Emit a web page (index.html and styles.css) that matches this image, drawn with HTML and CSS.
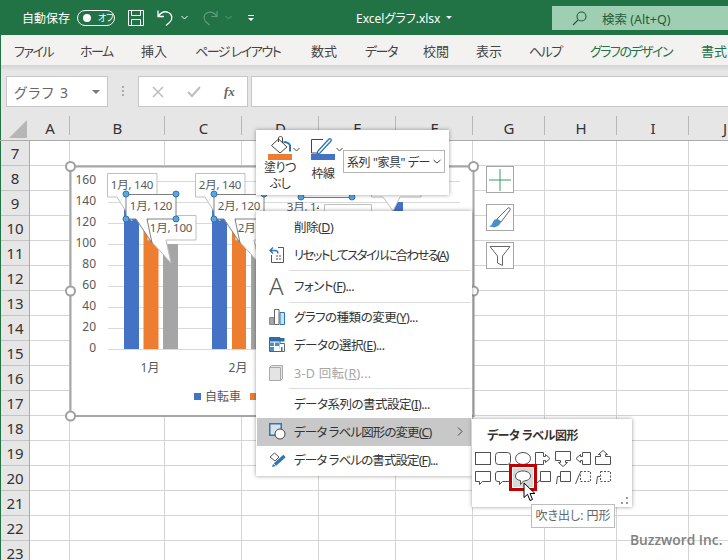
FILE: index.html
```html
<!DOCTYPE html>
<html lang="ja">
<head>
    <meta charset="UTF-8">
    <title>Excelグラフ.xlsx</title>
    <link rel="stylesheet" href="styles.css">
</head>
<body>
    <!-- タイトルバー -->
    <header class="titlebar">
        <span class="autosave">自動保存</span>
        <span class="toggle"><i class="toggle-dot"></i><span class="toggle-text">オフ</span></span>
        <svg class="qat qat-save" width="16" height="16" viewBox="0 0 16 16" fill="none" stroke="#fff"><path d="M.5.5h15v15H.5zM3.5.5v5h9v-5M3.5 15.500v-6h9v6"/></svg>
        <svg class="qat qat-undo" width="17" height="17" viewBox="0 0 17 17" fill="none" stroke="#fff" stroke-width="1.3"><path d="M1 1.500v6h6M1.500 7C4 3.500 8 2 11.500 3.500c4 2 4.500 7 1 10L9 16.500"/></svg>
        <svg class="qat qat-caret" width="7" height="5" viewBox="0 0 7 5" fill="none" stroke="#fff"><path d="M.5 1l3 3 3-3"/></svg>
        <svg class="qat qat-redo" width="16" height="17" viewBox="0 0 17 17" fill="none" stroke="#5f9f7f" stroke-width="1.2"><path d="M16 1.500v6h-6M15.500 7C13 3.500 9 2 5.500 3.500c-4 2-4.500 7-1 10L8 16.500"/></svg>
        <svg class="qat qat-caret2" width="7" height="5" viewBox="0 0 7 5" fill="none" stroke="#5f9f7f"><path d="M.5 1l3 3 3-3"/></svg>
        <svg class="qat qat-more" width="8" height="8" viewBox="0 0 8 8" fill="#fff"><path d="M1 1h6v1H1zM1 4h6L4 7z"/></svg>
        <span class="doc-title">Excelグラフ.xlsx</span>
        <i class="doc-caret"></i>
        <div class="search">
            <svg width="15" height="15" viewBox="0 0 15 15" fill="none" stroke="#1f5c3a" stroke-width="1.1"><circle cx="9.500" cy="5.500" r="4.500"/><path d="M6 9l-5 5"/></svg>
            <span>検索 (Alt+Q)</span>
        </div>
    </header>

    <!-- リボンのタブ -->
    <nav class="tabs">
        <span class="tab-kana">ファイル</span>
        <span class="tab-kana">ホーム</span>
        <span>挿入</span>
        <span class="tab-kana">ページ レイアウト</span>
        <span>数式</span>
        <span class="tab-kana">データ</span>
        <span>校閲</span>
        <span>表示</span>
        <span class="tab-kana">ヘルプ</span>
        <span class="tab-kana tab-green">グラフのデザイン</span>
        <span class="tab-green">書式</span>
    </nav>

    <!-- 数式バー -->
    <div class="formula-bar">
        <div class="name-box"><span>グラフ 3</span><i class="name-caret"></i></div>
        <div class="grip"></div>
        <div class="fx-box">
            <svg width="12" height="12" viewBox="0 0 12 12" stroke="#bdbdbd" stroke-width="1.500"><path d="M1 1l10 10M11 1L1 11"/></svg>
            <svg width="14" height="12" viewBox="0 0 14 12" fill="none" stroke="#bdbdbd" stroke-width="2"><path d="M1 6l4 4 8-9"/></svg>
            <span class="fx">fx</span>
        </div>
        <div class="formula-input"></div>
    </div>

    <!-- シート -->
    <main class="sheet">
        <div class="col-head">
            <div class="corner"><i></i></div>
            <span class="c-a">A</span><span class="c-b">B</span><span class="c-c">C</span><span class="c-c">D</span><span class="c-c">E</span><span class="c-c">F</span><span class="c-g">G</span><span class="c-g">H</span><span class="c-g">I</span><span class="c-g">J</span>
        </div>
        <div class="sheet-body">
            <div class="row-head">
                <span>7</span><span>8</span><span>9</span><span>10</span><span>11</span><span>12</span><span>13</span><span>14</span><span>15</span><span>16</span><span>17</span><span>18</span><span>19</span><span>20</span><span>21</span><span>22</span><span>23</span>
            </div>
            <div class="cells">
                <i class="c-a"></i><i class="c-b"></i><i class="c-c"></i><i class="c-c"></i><i class="c-c"></i><i class="c-c"></i><i class="c-g"></i><i class="c-g"></i><i class="c-g"></i><i class="c-g"></i>
            </div>
        </div>

        <!-- グラフ -->
        <svg class="chart" width="404" height="251" viewBox="70 166 404 251">
            <rect x="71" y="167" width="402" height="249" fill="#fff"/>
            <g stroke="#d9d9d9">
                <path d="M108 181.500h352M108 202.500h352M108 223.500h352M108 244.500h352M108 265.500h352M108 286.500h352M108 307.500h352M108 328.500h352M108 349.500h352"/>
            </g>
            <g class="axis" text-anchor="end">
                <text x="96" y="184">160</text><text x="96" y="205">140</text><text x="96" y="226">120</text><text x="96" y="247">100</text><text x="96" y="268">80</text><text x="96" y="289">60</text><text x="96" y="310">40</text><text x="96" y="331">20</text><text x="96" y="352">0</text>
            </g>
            <g class="axis" text-anchor="middle">
                <text x="150" y="372">1月</text><text x="238" y="372">2月</text>
            </g>
            <rect x="194" y="393" width="7" height="7" fill="#4472c4"/>
            <text class="axis" x="205" y="401">自転車</text>
            <rect x="250" y="393" width="7" height="7" fill="#ed7d31"/>

            <!-- 棒 -->
            <path fill="#4472c4" d="M124 202h15v147h-15zM212 202h15v147h-15zM392 202h11v147h-11z"/>
            <path fill="#ed7d31" d="M143.500 223h15v126h-15zM232 223h14v126h-14z"/>
            <path fill="#a5a5a5" d="M163 244h15v105h-15zM251 244h15v105h-15z"/>

            <!-- データラベル -->
            <g class="label">
                <path d="M107.500 173.500h49.500v23.500h-30l5 24-15-24h-9.500z"/>
                <path d="M195.500 173.500h49.500v23.500h-30l5 24-15-24h-9.500z"/>
                <path d="M371.500 173.500h49.500v23.500h-21l-7 14-10-14h-11.500z"/>
                <path d="M147.500 215.500h48.500v24.500h-30l5 23-21-23h-2.500z"/>
                <path d="M235.500 215.500h48.500v24.500h-30l5 23-21-23h-2.500z"/>
            </g>
            <g class="label-sel">
                <path d="M126 194.500h50v24.500h-29l5 24-16-24h-10z"/>
                <path d="M214 194.500h50v24.500h-29l5 24-16-24h-10z"/>
                <path d="M301 197.500h51"/>
            </g>
            <g class="chart-text" text-anchor="middle">
                <text x="132" y="189">1月, 140</text><text x="151" y="210">1月, 120</text><text x="171" y="232">1月, 100</text>
                <text x="220" y="189">2月, 140</text><text x="239" y="210">2月, 120</text><text x="259" y="232">2月, 100</text>
                <text x="308" y="211">3月, 140</text>
            </g>
            <rect x="319" y="203" width="60" height="10" fill="#fff"/>
            <g class="label"><path d="M324.500 204.500h47v10h-47z"/></g>
            <g class="sel-handle">
                <circle cx="126" cy="194" r="3"/><circle cx="176" cy="194" r="3"/><circle cx="126" cy="219" r="3"/><circle cx="176" cy="219" r="3"/>
                <circle cx="214" cy="194" r="3"/><circle cx="264" cy="194" r="3"/><circle cx="214" cy="219" r="3"/>
                <circle cx="301" cy="197" r="3"/><circle cx="352" cy="197" r="3"/>
            </g>
        </svg>
        <svg class="chart-frame" width="424" height="270" viewBox="60 156 424 270" fill="none">
            <rect x="70.500" y="166.500" width="403" height="249.500" stroke="#a6a6a6" stroke-width="2"/>
            <g class="handle">
                <circle cx="70.500" cy="166.500" r="4.500"/><circle cx="70.500" cy="291" r="4.500"/><circle cx="70.500" cy="416" r="4.500"/>
                <circle cx="473.500" cy="166.500" r="4.500"/><circle cx="473.500" cy="291" r="4.500"/>
            </g>
        </svg>

        <!-- グラフ右のボタン -->
        <div class="side-buttons">
            <div class="side-btn"><svg width="22" height="22" viewBox="0 0 22 22" stroke="#3f9a63"><path d="M11 0v22M0 11h22"/></svg></div>
            <div class="side-btn"><svg width="24" height="24" viewBox="0 0 24 24"><path d="M9 13L20 2c1-1 3 .500 2 2L13 16z" fill="#fff" stroke="#666"/><path d="M9 13c-3 0-4 3-5 5-.500 1.500-2 2-3 2 3 2 10 2 12-4z" fill="#4a90c8"/></svg></div>
            <div class="side-btn"><svg width="22" height="22" viewBox="0 0 22 22" fill="#fff" stroke="#666"><path d="M1 1.500h20L13.500 11v9.500l-5-2.500v-7z"/></svg></div>
        </div>

        <!-- ミニツールバー -->
        <div class="mini-bar">
            <div class="mini-tool mini-fill">
                <div class="mini-icon">
                    <svg width="24" height="18" viewBox="0 0 24 18" fill="none"><path d="M3.500 9.500l7-6.500 8.500 8-7 6z" stroke="#444"/><path d="M10.500 6V2c0-2 4-2 4 0v5" stroke="#444"/><path d="M15.500 6c3 0 6 1.500 6.500 3.500v6" stroke="#2e75b6" stroke-width="2"/></svg>
                    <svg class="mini-caret" width="7" height="5" viewBox="0 0 7 5" fill="none" stroke="#444"><path d="M.5 1l3 3 3-3"/></svg>
                </div>
                <i class="swatch swatch-orange"></i>
                <span class="mini-label">塗りつ<br>ぶし</span>
            </div>
            <div class="mini-tool mini-line">
                <div class="mini-icon">
                    <svg width="24" height="18" viewBox="0 0 24 18" fill="none"><path d="M.5 17V3.500H12M.5 17H6" stroke="#444"/><path d="M7 15L18 3c1-1 3 .500 2 2L9 17l-3 1z" fill="#fff" stroke="#2e75b6" stroke-width="1.300"/></svg>
                    <svg class="mini-caret" width="7" height="5" viewBox="0 0 7 5" fill="none" stroke="#444"><path d="M.5 1l3 3 3-3"/></svg>
                </div>
                <i class="swatch swatch-blue"></i>
                <span class="mini-label mini-label-low">枠線</span>
            </div>
            <div class="series-select">
                <span>系列 "家具" デー</span>
                <svg width="8" height="5" viewBox="0 0 8 5" fill="none" stroke="#444"><path d="M.5 1L4 4l3.500-3"/></svg>
            </div>
        </div>

        <!-- コンテキストメニュー -->
        <div class="menu">
            <div class="menu-item"><span class="menu-icon"></span><span>削除(<u>D</u>)</span></div>
            <div class="menu-item">
                <span class="menu-icon"><svg width="16" height="17" viewBox="0 0 16 17" fill="none"><path d="M9 1.500h5.500v15h-12V9" stroke="#555"/><path d="M1 4.500h5c2 0 3 1 3 3M4 1.500l-3 3 3 3" stroke="#2e75b6" stroke-width="1.300"/><path d="M7 10h5M7 13h5" stroke="#555" stroke-dasharray="2 1"/></svg></span>
                <span class="text-tight">リセットしてスタイルに合わせる(<u>A</u>)</span>
            </div>
            <hr class="menu-sep">
            <div class="menu-item menu-item-font"><span class="menu-icon menu-icon-a">A</span><span>フォント(<u>F</u>)...</span></div>
            <hr class="menu-sep">
            <div class="menu-item">
                <span class="menu-icon"><svg width="16" height="16" viewBox="0 0 16 16"><path d="M.500 8.500h4.500v7H.500z" fill="#a6a6a6" stroke="#8c8c8c"/><path d="M5.500.5h4.500v15H5.500z" fill="#fff" stroke="#666"/><path d="M11 3.500h4.500v12H11z" fill="#cde2f4" stroke="#2e75b6"/></svg></span>
                <span>グラフの種類の変更(<u>Y</u>)...</span>
            </div>
            <div class="menu-item">
                <span class="menu-icon"><svg width="16" height="15" viewBox="0 0 16 15"><path d="M.500.5h10.500v14H.500z" fill="#fff" stroke="#2e6da4"/><path d="M.5 1h15v3.500H.5z" fill="#2e6da4"/><path d="M1 5.500h4v3.500H1zM6 5.500h4v3.500H6zM1 10h4v4H1z" fill="#4a90c8"/><path d="M11 6.500h4.500v8H10" fill="#fff" stroke="#666"/><path d="M12 10h1.500v4H12z" fill="#2e75b6"/></svg></span>
                <span>データの選択(<u>E</u>)...</span>
            </div>
            <div class="menu-item menu-item-off">
                <span class="menu-icon"><svg width="14" height="16" viewBox="0 0 14 16"><path d="M.5 2.500l2-2h11v13l-2 2H.5z" fill="#e4e4e4" stroke="#aaa"/><path d="M.5 2.500h11v13" fill="none" stroke="#aaa"/></svg></span>
                <span>3-D 回転(<u>R</u>)...</span>
            </div>
            <hr class="menu-sep menu-sep-last">
            <div class="menu-item"><span class="menu-icon"></span><span>データ系列の書式設定(<u>I</u>)...</span></div>
            <div class="menu-item menu-item-on">
                <span class="menu-icon"><svg width="17" height="17" viewBox="0 0 17 17"><path d="M.75.75h11.500v11.500H.75z" fill="#d8e2ec" stroke="#2e75b6" stroke-width="1.500"/><circle cx="11" cy="11" r="5" fill="#fff" stroke="#444"/></svg></span>
                <span class="text-mid">データ ラベル図形の変更(<u>C</u>)</span>
                <svg class="menu-chevron" width="6" height="9" viewBox="0 0 6 9" fill="none" stroke="#444"><path d="M1 .5l4 4-4 4"/></svg>
            </div>
            <div class="menu-item">
                <span class="menu-icon"><svg width="17" height="16" viewBox="0 0 17 16" fill="none"><path d="M1 5l4.500-4 4.500 4-4 4z" stroke="#555"/><path d="M15.500 4L6 12.500" stroke="#2e75b6" stroke-width="3.500"/><path d="M4 12l-1 3 4-1z" fill="#2e75b6"/></svg></span>
                <span class="text-mid">データ ラベルの書式設定(<u>F</u>)...</span>
            </div>
        </div>

        <!-- サブメニュー -->
        <div class="gallery">
            <div class="gallery-title">データ ラベル図形</div>
            <div class="shape-grid">
                <svg viewBox="0 0 20 19"><rect x="2.500" y="3.500" width="15" height="12"/></svg>
                <svg viewBox="0 0 20 19"><rect x="2.500" y="3.500" width="15" height="12" rx="3"/></svg>
                <svg viewBox="0 0 20 19"><ellipse cx="10" cy="9.500" rx="7.500" ry="6"/></svg>
                <svg viewBox="0 0 20 19"><path d="M2.500 3.500h8v4h2v-2l4.500 4-4.500 4v-2h-2v4h-8z"/></svg>
                <svg viewBox="0 0 20 19"><path d="M2.500 2.500h15v9h-5v2h2l-4.500 4-4.500-4h2v-2h-5z"/></svg>
                <svg viewBox="0 0 20 19"><path d="M17.500 3.500h-8v4h-2v-2l-4.500 4 4.500 4v-2h2v4h8z"/></svg>
                <svg viewBox="0 0 20 19"><path d="M2.500 15.500v-8h5v-2h-2l4.500-4 4.500 4h-2v2h5v8z"/></svg>
                <svg viewBox="0 0 20 19"><path d="M2.500 3.500h15v10h-8l-3 3v-3h-4z"/></svg>
                <svg viewBox="0 0 20 19"><path d="M5 3.500h10c1.500 0 2.500 1 2.500 2.500v5c0 1.500-1 2.500-2.500 2.500H9.500l-3 3v-3H5c-1.500 0-2.500-1-2.500-2.500V6c0-1.500 1-2.500 2.500-2.500z"/></svg>
                <svg class="shape-on" viewBox="0 0 20 19"><path d="M10 3c4 0 7.500 2 7.500 5s-3.500 5-7 5l-3 3.500V12.500C4 12 2.500 10.500 2.500 8c0-3 3.500-5 7.500-5z"/></svg>
                <svg viewBox="0 0 20 19"><path d="M7.500 3.500h10v10h-10zM7.500 12L2 16.500"/></svg>
                <svg viewBox="0 0 20 19"><path d="M7.500 3.500h10v10h-10zM7.500 8.500h-3L3.500 16"/></svg>
                <svg viewBox="0 0 20 19"><path class="dash" d="M7.500 3.500h10v10h-10z"/><path d="M7 5L2.500 16"/></svg>
                <svg viewBox="0 0 20 19"><path class="dash" d="M7.500 3.500h10v10h-10z"/><path d="M7 8.500H4.500L3.500 16"/></svg>
            </div>
            <svg class="gallery-grip" width="7" height="7" viewBox="0 0 7 7" fill="#999"><path d="M5 0h2v2H5zM0 5h2v2H0zM5 5h2v2H5z"/></svg>
        </div>

        <svg class="cursor" width="14" height="20" viewBox="0 0 14 20"><path d="M1 1v14.500l3.500-3.200L7 18.500l2.500-1-2.500-6h5z" fill="#fff" stroke="#000"/></svg>
        <div class="tooltip">吹き出し: 円形</div>
        <div class="watermark">Buzzword Inc.</div>
    </main>
</body>
</html>
```

FILE: styles.css
```css
/* 基本 */
* {
    margin: 0;
    padding: 0;
    box-sizing: border-box;
}

body {
    width: 728px;
    height: 560px;
    overflow: hidden;
    background: #fff;
    color: #333;
    font-family: "Noto Sans", "Noto Sans CJK JP", sans-serif;
    font-feature-settings: "palt";
    font-size: 12px;
}

i {
    display: block;
}

/* タイトルバー */
.titlebar {
    height: 35px;
    background: #217346;
    color: #fff;
    display: flex;
    align-items: center;
    position: relative;
    padding-left: 22px;
}

.autosave {
    width: 55px;
}

.toggle {
    width: 38px;
    height: 16px;
    border: 1px solid #fff;
    border-radius: 8px;
    display: flex;
    align-items: center;
    padding-left: 5px;
}

.toggle-dot {
    width: 8px;
    height: 8px;
    border-radius: 50%;
    background: #fff;
}

.toggle-text {
    font-size: 9px;
    margin-left: 7px;
}

.qat-save { margin-left: 13px; }
.qat-undo { margin-left: 13px; }
.qat-caret { margin-left: 7px; }
.qat-redo { margin-left: 14px; }
.qat-caret2 { margin-left: 7px; }
.qat-more { margin-left: 15px; }

.doc-title {
    margin-left: 101px;
    font-size: 12px;
}

.doc-caret {
    margin-left: 6px;
    border: 3px solid transparent;
    border-top: 3px solid #fff;
    border-bottom: 0;
}

.search {
    margin-left: auto;
    width: 176px;
    height: 24px;
    margin-top: 1px;
    background: #9fcfb3;
    color: #1f5c3a;
    display: flex;
    align-items: center;
    gap: 15px;
    padding-left: 20px;
    font-size: 12.5px;
}

/* タブ */
.tabs {
    height: 30px;
    background: #f3f2f1;
    border-left: 1px solid #217346;
    display: grid;
    grid-template-columns: 66px 61px 54px 116px 54px 58px 53px 53px 61px 111px 27px;
    align-items: center;
    padding-left: 13px;
    white-space: nowrap;
    font-size: 13px;
    color: #444;
}

.tab-kana {
    letter-spacing: -1.5px;
}

.tab-green {
    color: #217346;
}

/* 数式バー */
.formula-bar {
    height: 51px;
    background: linear-gradient(#d4d4d4, #e6e6e6 6px);
    border-left: 1px solid #217346;
    display: flex;
    padding: 11px 0 9px 5px;
}

.name-box {
    width: 102px;
    background: #fff;
    border: 1px solid #c6c6c6;
    display: flex;
    align-items: center;
    justify-content: space-between;
    padding: 0 7px;
    font-size: 14px;
    color: #666;
    letter-spacing: 1.5px;
}

.name-caret {
    border: 4px solid transparent;
    border-top: 4px solid #777;
    border-bottom: 0;
}

.grip {
    width: 2px;
    height: 10px;
    margin: 10px 14px 0;
    border-left: 2px dotted #aaa;
}

.fx-box {
    width: 110px;
    background: #fff;
    border: 1px solid #c6c6c6;
    display: flex;
    align-items: center;
    gap: 23px;
    padding-left: 13px;
}

.fx {
    font-family: "Liberation Serif", serif;
    font-style: italic;
    font-weight: bold;
    font-size: 13px;
    color: #666;
}

.formula-input {
    flex: 1;
    margin-left: 3px;
    background: #fff;
    border: 1px solid #c6c6c6;
    border-right: 0;
}

/* シート */
.sheet {
    position: relative;
    height: 444px;
    font-size: 15px;
}

.c-a { width: 40px; }
.c-b { width: 95px; }
.c-c { width: 77px; }
.c-g { width: 72px; }

.col-head {
    height: 25px;
    background: #e6e6e6;
    border-bottom: 1px solid #ababab;
    display: flex;
    text-align: center;
    line-height: 24px;
}

.col-head span {
    flex: none;
    position: relative;
}

.col-head span::after {
    content: "";
    position: absolute;
    right: 0;
    top: 0;
    bottom: 5px;
    width: 1px;
    background: #b8b8b8;
}

.corner {
    width: 30px;
    flex: none;
    position: relative;
    border-left: 1px solid #217346;
}

.corner i {
    position: absolute;
    right: 3px;
    bottom: 2px;
    border-left: 18px solid transparent;
    border-bottom: 18px solid #b6b6b6;
}

.sheet-body {
    display: flex;
    height: 419px;
}

.row-head {
    width: 30px;
    flex: none;
    background: #e6e6e6;
    border-left: 1px solid #217346;
    border-right: 1px solid #ababab;
    display: flex;
    flex-direction: column;
}

.row-head span {
    height: 25px;
    flex: none;
    line-height: 25px;
    text-align: center;
    border-bottom: 1px solid #c4c4c4;
}

.cells {
    flex: 1;
    display: flex;
    background: repeating-linear-gradient(#fff 0, #fff 24px, #d4d4d4 24px, #d4d4d4 25px);
}

.cells i {
    flex: none;
    height: 100%;
    border-right: 1px solid #d4d4d4;
}

/* グラフ (座標はページ基準: シートの top は 116px) */
.chart {
    position: absolute;
    left: 70px;
    top: 50px;
}

.chart-frame {
    position: absolute;
    left: 60px;
    top: 40px;
}

.axis {
    font-size: 12px;
    fill: #595959;
}

.chart-text {
    font-size: 11.5px;
    letter-spacing: -0.2px;
    fill: #595959;
}

.label path {
    fill: #fff;
    stroke: #bfbfbf;
}

.label-sel path {
    fill: #fff;
    stroke: #7f7f7f;
}

.sel-handle circle {
    fill: #5ba6dc;
    stroke: #2e75b6;
}

.handle circle {
    fill: #fff;
    stroke: #a0a0a0;
    stroke-width: 2;
}

.side-buttons {
    position: absolute;
    left: 486px;
    top: 50px;
    display: flex;
    flex-direction: column;
    gap: 11px;
}

.side-btn {
    width: 28px;
    height: 27px;
    background: #fff;
    border: 1px solid #a6a6a6;
    display: flex;
    align-items: center;
    justify-content: center;
}

/* ミニツールバー */
.mini-bar {
    position: absolute;
    left: 256px;
    top: 14px;
    width: 193px;
    height: 65px;
    background: #fff;
    box-shadow: 0 0 4px rgba(0, 0, 0, 0.4);
    display: flex;
    font-size: 12px;
    color: #333;
}

.mini-tool {
    width: 48px;
    display: flex;
    flex-direction: column;
    padding-top: 6px;
}

.mini-fill {
    margin-left: 12px;
    width: 43px;
}

.mini-icon {
    height: 18px;
    display: flex;
    align-items: flex-start;
}

.mini-caret {
    margin: 11px 0 0 1px;
}

.swatch {
    width: 24px;
    height: 6px;
}

.swatch-orange { background: #ed7d31; }
.swatch-blue { background: #4472c4; }

.mini-label {
    width: 32px;
    margin-left: -4px;
    text-align: center;
    line-height: 16px;
    white-space: nowrap;
    letter-spacing: -0.5px;
}

.mini-label-low {
    margin-top: 6px;
}

.series-select {
    position: absolute;
    left: 87px;
    top: 20px;
    width: 102px;
    height: 23px;
    border: 1px solid #b4b4b4;
    display: flex;
    align-items: center;
    justify-content: space-between;
    padding: 0 3px;
    white-space: nowrap;
    letter-spacing: -0.4px;
}

/* コンテキストメニュー */
.menu {
    position: absolute;
    left: 256px;
    top: 95px;
    width: 216px;
    height: 265px;
    background: #fff;
    box-shadow: 0 0 4px rgba(0, 0, 0, 0.4);
    padding: 2px 1px;
    font-size: 12.5px;
    letter-spacing: -0.5px;
    color: #333;
}

.menu-item {
    height: 28px;
    display: flex;
    align-items: center;
    white-space: nowrap;
    position: relative;
    padding-bottom: 1px;
}

.text-tight {
    letter-spacing: -1.7px;
}

.text-mid {
    letter-spacing: -0.9px;
}

.menu-item-font {
    height: 30px;
}

.menu-item-on {
    background: #c8c8c8;
}

.menu-item-off {
    color: #a6a6a6;
    letter-spacing: 0.3px;
}

.menu-icon {
    width: 37px;
    flex: none;
    padding-left: 12px;
    display: flex;
    align-items: center;
}

.menu-icon-a {
    font-size: 24px;
    font-weight: 300;
    color: #555;
}

.menu-sep {
    border: 0;
    height: 1px;
    background: #dcdcdc;
    margin: 1px 0 0 32px;
}

.menu-sep-last {
    margin-bottom: 1px;
}

.menu-chevron {
    position: absolute;
    right: 8px;
    top: 9px;
}

/* サブメニュー */
.gallery {
    position: absolute;
    left: 472px;
    top: 303px;
    width: 160px;
    height: 88px;
    background: #fff;
    box-shadow: 0 0 4px rgba(0, 0, 0, 0.4);
    padding: 7px 1px;
    color: #333;
}

.gallery-title {
    font-weight: bold;
    font-size: 12px;
    letter-spacing: -0.5px;
    padding-left: 14px;
    height: 23px;
}

.shape-grid {
    display: grid;
    grid-template-columns: repeat(7, 20px);
    grid-auto-rows: 19px;
}

.shape-grid svg {
    width: 20px;
    height: 19px;
    fill: #fff;
    stroke: #505050;
}

.shape-grid .dash {
    stroke-dasharray: 2 1.500;
}

.shape-grid .shape-on {
    background: #d9d9d9;
    outline: 3px solid #c00000;
    outline-offset: 1px;
}

.gallery-grip {
    position: absolute;
    right: 4px;
    bottom: 3px;
}

.cursor {
    position: absolute;
    left: 523px;
    top: 366px;
}

.tooltip {
    position: absolute;
    left: 531px;
    top: 388px;
    width: 84px;
    height: 24px;
    background: #fff;
    border: 1px solid #bdbdbd;
    color: #666;
    font-size: 12px;
    line-height: 22px;
    text-align: center;
    white-space: nowrap;
}

.watermark {
    position: absolute;
    left: 630px;
    top: 414px;
    font-family: "Open Sans", sans-serif;
    font-weight: 600;
    font-size: 13.8px;
    color: #808080;
    white-space: nowrap;
}
```
